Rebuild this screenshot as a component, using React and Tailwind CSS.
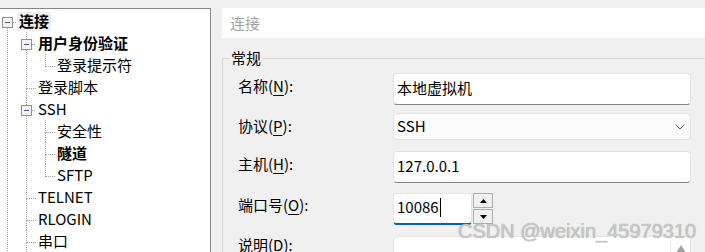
import React from "react";

const tree = [
  { label: "连接", anc: [], box: true, bold: true, selected: true, first: true, next: true },
  { label: "用户身份验证", anc: [true], box: true, bold: true, next: true },
  { label: "登录提示符", anc: [true, true], next: false },
  { label: "登录脚本", anc: [true], next: true },
  { label: "SSH", anc: [true], box: true, next: true },
  { label: "安全性", anc: [true, true], next: true },
  { label: "隧道", anc: [true, true], bold: true, next: true },
  { label: "SFTP", anc: [true, true], next: false },
  { label: "TELNET", anc: [true], next: true },
  { label: "RLOGIN", anc: [true], next: true },
  { label: "串口", anc: [true], next: true },
];

const dot = {
  stroke: "#a0a0a0",
  strokeDasharray: "1 1",
  shapeRendering: "crispEdges",
};

function PassLine({ on }) {
  return (
    <svg width="19" height="22" className="shrink-0">
      {on && <line x1="9.5" y1="0" x2="9.5" y2="22" {...dot} />}
    </svg>
  );
}

function Connector({ item }) {
  const mid = 12.5;
  return (
    <svg width="19" height="22" className="shrink-0">
      {!item.first && (
        <line x1="9.5" y1="0" x2="9.5" y2={item.box ? 7 : mid} {...dot} />
      )}
      {item.next && (
        <line x1="9.5" y1={item.box ? 18 : mid} x2="9.5" y2="22" {...dot} />
      )}
      <line x1={item.box ? 15 : 10} y1={mid} x2="19" y2={mid} {...dot} />
      {item.box && (
        <g shapeRendering="crispEdges">
          <rect x="4.5" y="7.5" width="10" height="10" fill="#f3f3f3" stroke="#8e8f8f" />
          <line x1="7" y1={mid} x2="12" y2={mid} stroke="#3a5bb0" />
        </g>
      )}
    </svg>
  );
}

function TreeRow({ item }) {
  return (
    <div className="flex items-center h-[22px]">
      {item.anc.map((on, i) => (
        <PassLine key={i} on={on} />
      ))}
      <Connector item={item} />
      <span
        className={
          "h-[19px] leading-[18px] px-[2px] whitespace-nowrap " +
          (item.bold ? "font-bold " : "") +
          (item.selected ? "bg-[#efefef]" : "")
        }
      >
        {item.label}
      </span>
    </div>
  );
}

function Label({ text, k, className }) {
  const [a, b] = text.split(k);
  return (
    <div className={"w-[155px] shrink-0 leading-[22px] whitespace-nowrap " + className}>
      {a}
      <span className="underline underline-offset-[3px]">{k}</span>
      {b}
    </div>
  );
}

const field =
  "w-[298px] h-[32px] bg-white border border-[#e3e3e3] border-b-[#868686] rounded-[4px] flex items-center pl-[3px] pb-[2px]";

export default function App() {
  return (
    <div className="relative w-[705px] h-[252px] overflow-hidden bg-[#f0f0f0] flex pt-[8px] text-[15px] text-black font-['Noto_Sans_CJK_SC','Noto_Sans',sans-serif]">
      <div className="w-[211px] shrink-0 h-[260px] bg-white border-t border-r border-[#828790] pt-[1px] overflow-hidden">
        <div className="-ml-[2px]">
          {tree.map((item) => (
            <TreeRow key={item.label} item={item} />
          ))}
        </div>
      </div>

      <div className="flex-1 min-w-0 pl-[11px] flex flex-col">
        <div className="h-[30px] shrink-0 bg-white flex items-center pl-[8px] text-[#a3a3a3]">
          连接
        </div>
        <div className="mt-[20px] flex-1 border-t border-l border-[#d9d9d9] flex flex-col">
          <div className="-mt-[12px] ml-[6px] w-fit px-[2px] bg-[#f0f0f0] leading-[22px]">
            常规
          </div>
          <div className="pl-[15px] mt-[4px] flex flex-col">
            <div className="flex items-start h-[32px]">
              <Label text="名称(N):" k="N" className="pt-[2px]" />
              <div className={field}>本地虚拟机</div>
            </div>

            <div className="flex items-start h-[27px] mt-[8px]">
              <Label text="协议(P):" k="P" className="pt-[2px]" />
              <div className="w-[298px] h-[27px] bg-[#fbfbfb] border border-[#e3e3e3] rounded-[4px] flex items-center justify-between pl-[3px] pr-[5px]">
                <span>SSH</span>
                <svg width="10" height="6" viewBox="0 0 10 6">
                  <polyline points="0.5,0.5 5,5 9.5,0.5" fill="none" stroke="#5f5f5f" strokeWidth="1" />
                </svg>
              </div>
            </div>

            <div className="flex items-start h-[32px] mt-[11px]">
              <Label text="主机(H):" k="H" className="pt-[2px]" />
              <div className={field}>127.0.0.1</div>
            </div>

            <div className="flex items-start h-[32px] mt-[10px]">
              <Label text="端口号(O):" k="O" className="pt-[1px]" />
              <div className="flex gap-[1px]">
                <div className="w-[79px] h-[32px] bg-white border border-[#e3e3e3] border-b-2 border-b-[#005fb8] rounded-[4px] flex items-center pl-[3px] pb-[2px]">
                  <span>10086</span>
                  <span className="w-[1px] h-[19px] bg-black ml-[1px]" />
                </div>
                <div className="flex flex-col gap-[1px] w-[20px]">
                  <div className="h-[15px] border border-[#adadad] bg-[#f0f0f0] flex items-center justify-center">
                    <svg width="7" height="4" viewBox="0 0 7 4">
                      <polygon points="3.5,0 7,4 0,4" fill="#000" />
                    </svg>
                  </div>
                  <div className="h-[15px] border border-[#adadad] bg-[#f0f0f0] flex items-center justify-center">
                    <svg width="7" height="4" viewBox="0 0 7 4">
                      <polygon points="0,0 7,0 3.5,4" fill="#000" />
                    </svg>
                  </div>
                </div>
              </div>
            </div>

            <div className="flex items-start h-[40px] mt-[11px]">
              <Label text="说明(D):" k="D" className="-mt-[2px]" />
              <div className="w-[298px] h-[40px] bg-white border border-[#e3e3e3] rounded-[4px] flex justify-end">
                <div className="w-[20px] mt-[3px] border-l border-[#e6e6e6] flex justify-center pt-[5px]">
                  <svg width="10" height="8" viewBox="0 0 10 8">
                    <polygon points="5,0 10,8 0,8" fill="#a0a0a0" />
                  </svg>
                </div>
              </div>
            </div>
          </div>
        </div>
      </div>

      <div className="absolute left-[458px] top-[219px] text-[20px] leading-[24px] whitespace-nowrap font-['Liberation_Sans',Arial,sans-serif] text-[#c8c8c8] [text-shadow:0_0_1px_#9a9a9a]">
        CSDN @weixin_45979310
      </div>
    </div>
  );
}
